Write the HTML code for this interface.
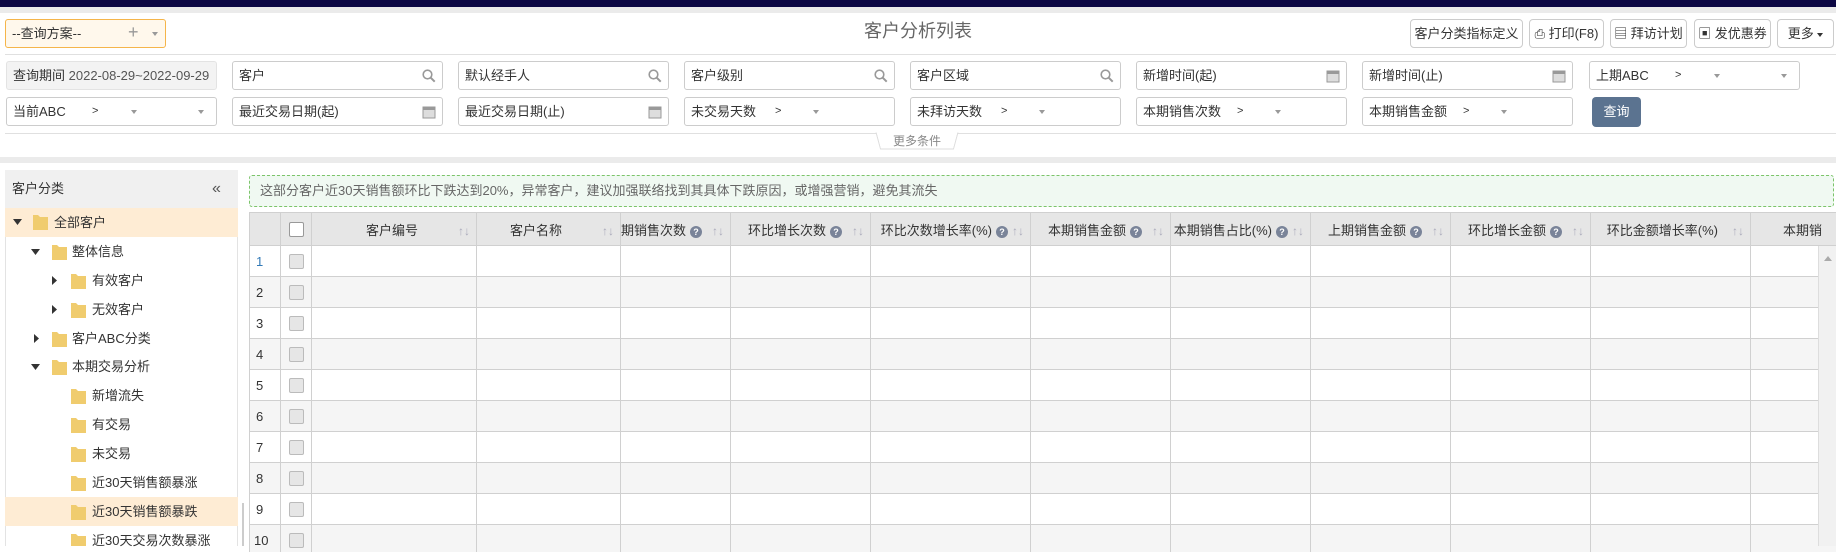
<!DOCTYPE html>
<html><head><meta charset="utf-8"><style>
*{box-sizing:border-box;margin:0;padding:0}
body{width:1836px;height:546px;overflow:hidden;background:#fff;font-family:"Liberation Sans","Noto Sans CJK SC",sans-serif;font-size:13px;color:#333;position:relative}
.a{position:absolute}
.inp{position:absolute;height:29px;border:1px solid #ccc;border-radius:3px;background:#fff;padding-left:6px;line-height:27px;font-size:13px;color:#333}
.btn{position:absolute;top:19px;height:29px;border:1px solid #ccc;border-radius:4px;background:#fff;line-height:27px;text-align:center;font-size:13px}
.ico{position:absolute;right:6px;top:7px}
.caret{display:inline-block;width:0;height:0;border-left:3px solid transparent;border-right:3px solid transparent;border-top:4px solid #999;vertical-align:middle}
.tr{position:absolute;left:5px;width:233px;height:29px;line-height:29px;font-size:13px}
th,td{border:1px solid #d0d0d0;padding:0}
table{border-collapse:collapse;table-layout:fixed}
th{background:#e6e6e6;height:33px;font-weight:normal;font-size:13px;text-align:right;padding-right:6px;white-space:nowrap;overflow:hidden}
td{height:31px}
tr.e td{background:#f5f5f5}
.q{display:inline-block;width:12px;height:12px;border-radius:50%;background:#7a8499;color:#fff;font-size:9px;line-height:12px;text-align:center;font-weight:bold;margin:0 4px}
.s{color:#aab;font-size:12px;margin-left:6px}
.cb{width:15px;height:15px;border:1px solid #bbb;border-radius:2px;background:#e6e6e6;margin:auto}
</style></head><body>
<svg width="0" height="0" style="position:absolute"><defs>
<symbol id="mg" viewBox="0 0 14 14"><circle cx="5.5" cy="5.5" r="4.3" fill="none" stroke="#999" stroke-width="1.6"/><path d="M8.7 8.7l4 4" stroke="#999" stroke-width="2"/></symbol>
<symbol id="cal" viewBox="0 0 14 14"><rect x="1" y="2" width="12" height="11" fill="#ddd" stroke="#999"/><rect x="1" y="2" width="12" height="3" fill="#999"/></symbol>
</defs></svg>
<div class="a" style="left:0;top:0;width:1836px;height:7px;background:#0d0844"></div>
<div class="a" style="left:0;top:7px;width:1836px;height:6px;background:#ebebeb"></div>
<div class="a" style="left:5px;top:19px;width:161px;height:29px;border:1px solid #f5b54a;border-radius:3px;background:#fff8ec;line-height:27px;padding-left:6px">--查询方案--<span style="position:absolute;left:122px;color:#999;font-size:18px;top:-1px">+</span><span class="caret" style="position:absolute;left:146px;top:12px"></span></div>
<div class="a" style="left:0;top:11px;width:1836px;text-align:center;font-size:18px;color:#666;line-height:40px;pointer-events:none">客户分析列表</div>
<div class="btn" style="left:1410px;width:113px">客户分类指标定义</div>
<div class="btn" style="left:1529px;width:75px">⎙ 打印(F8)</div>
<div class="btn" style="left:1610px;width:77px">▤ 拜访计划</div>
<div class="btn" style="left:1694px;width:77px">▣ 发优惠券</div>
<div class="btn" style="left:1777px;width:57px">更多 <span class="caret" style="border-top-color:#333"></span></div>
<div class="a" style="left:5px;top:54px;width:1831px;height:1px;background:#e0e0e0"></div>
<div class="inp" style="left:6px;top:61px;width:211px;background:#f3f3f3;border-color:#e3e3e3">查询期间 <span style="color:#555">2022-08-29~2022-09-29</span></div>
<div class="inp" style="left:232px;top:61px;width:211px">客户<svg class="ico" width="14" height="14"><use href="#mg"/></svg></div>
<div class="inp" style="left:458px;top:61px;width:211px">默认经手人<svg class="ico" width="14" height="14"><use href="#mg"/></svg></div>
<div class="inp" style="left:684px;top:61px;width:211px">客户级别<svg class="ico" width="14" height="14"><use href="#mg"/></svg></div>
<div class="inp" style="left:910px;top:61px;width:211px">客户区域<svg class="ico" width="14" height="14"><use href="#mg"/></svg></div>
<div class="inp" style="left:1136px;top:61px;width:211px">新增时间(起)<svg class="ico" width="14" height="14"><use href="#cal"/></svg></div>
<div class="inp" style="left:1362px;top:61px;width:211px">新增时间(止)<svg class="ico" width="14" height="14"><use href="#cal"/></svg></div>
<div class="inp" style="left:1589px;top:61px;width:211px">上期ABC<span class="a" style="left:85px;font-size:11px">&gt;</span><span class="caret a" style="left:124px;top:12px"></span><span class="caret a" style="left:191px;top:12px"></span></div>
<div class="inp" style="left:6px;top:97px;width:211px">当前ABC<span class="a" style="left:85px;font-size:11px">&gt;</span><span class="caret a" style="left:124px;top:12px"></span><span class="caret a" style="left:191px;top:12px"></span></div>
<div class="inp" style="left:232px;top:97px;width:211px">最近交易日期(起)<svg class="ico" width="14" height="14"><use href="#cal"/></svg></div>
<div class="inp" style="left:458px;top:97px;width:211px">最近交易日期(止)<svg class="ico" width="14" height="14"><use href="#cal"/></svg></div>
<div class="inp" style="left:684px;top:97px;width:211px">未交易天数<span class="a" style="left:90px;font-size:11px">&gt;</span><span class="caret a" style="left:128px;top:12px"></span></div>
<div class="inp" style="left:910px;top:97px;width:211px">未拜访天数<span class="a" style="left:90px;font-size:11px">&gt;</span><span class="caret a" style="left:128px;top:12px"></span></div>
<div class="inp" style="left:1136px;top:97px;width:211px">本期销售次数<span class="a" style="left:100px;font-size:11px">&gt;</span><span class="caret a" style="left:138px;top:12px"></span></div>
<div class="inp" style="left:1362px;top:97px;width:211px">本期销售金额<span class="a" style="left:100px;font-size:11px">&gt;</span><span class="caret a" style="left:138px;top:12px"></span></div>
<div class="a" style="left:1592px;top:97px;width:49px;height:30px;background:#5b7390;border-radius:4px;color:#fff;text-align:center;line-height:30px">查询</div>
<div class="a" style="left:5px;top:133px;width:1831px;height:1px;background:#e0e0e0"></div>
<div class="a" style="left:878px;top:133px;width:78px;height:17px;border:1px solid #ddd;border-top:none;background:#fff;transform:perspective(20px) rotateX(-8deg)"></div>
<div class="a" style="left:878px;top:133px;width:78px;text-align:center;font-size:12px;color:#888;line-height:17px">更多条件</div>
<div class="a" style="left:0;top:157px;width:1836px;height:6px;background:#ebebeb"></div>
<div class="a" style="left:5px;top:170px;width:233px;height:376px;border:1px solid #e3e3e3;border-bottom:none"></div>
<div class="a" style="left:5px;top:170px;width:233px;height:38px;background:#f0f0f0;line-height:38px;padding-left:7px">客户分类<span class="a" style="left:207px;color:#555;font-size:16px">«</span></div>
<div class="tr" style="top:208px;background:#feecd4"></div>
<div class="tr" style="top:497px;background:#feecd4"></div>
<svg class="a" style="left:0;top:0" width="240" height="546">
<g fill="#333">
<path d="M13 219h9l-4.5 6z"/><path d="M31 249h9l-4.5 6z"/>
<path d="M52 276v9l5-4.5z"/><path d="M52 305v9l5-4.5z"/><path d="M34 334v9l5-4.5z"/>
<path d="M31 364h9l-4.5 6z"/>
</g>
<g fill="#f0cc6e">
<path d="M33 215h5l2 2h8v13h-15z"/><path d="M52 245h5l2 2h8v13h-15z"/>
<path d="M71 274h5l2 2h8v13h-15z"/><path d="M71 303h5l2 2h8v13h-15z"/>
<path d="M52 332h5l2 2h8v13h-15z"/><path d="M52 360h5l2 2h8v13h-15z"/>
<path d="M71 389h5l2 2h8v13h-15z"/><path d="M71 418h5l2 2h8v13h-15z"/><path d="M71 447h5l2 2h8v13h-15z"/>
<path d="M71 476h5l2 2h8v13h-15z"/><path d="M71 505h5l2 2h8v13h-15z"/><path d="M71 534h5l2 2h8v13h-15z"/>
</g></svg>
<div class="a" style="left:54px;top:208px;line-height:29px">全部客户</div>
<div class="a" style="left:72px;top:237px;line-height:29px">整体信息</div>
<div class="a" style="left:92px;top:266px;line-height:29px">有效客户</div>
<div class="a" style="left:92px;top:295px;line-height:29px">无效客户</div>
<div class="a" style="left:72px;top:324px;line-height:29px">客户ABC分类</div>
<div class="a" style="left:72px;top:352px;line-height:29px">本期交易分析</div>
<div class="a" style="left:92px;top:381px;line-height:29px">新增流失</div>
<div class="a" style="left:92px;top:410px;line-height:29px">有交易</div>
<div class="a" style="left:92px;top:439px;line-height:29px">未交易</div>
<div class="a" style="left:92px;top:468px;line-height:29px">近30天销售额暴涨</div>
<div class="a" style="left:92px;top:497px;line-height:29px">近30天销售额暴跌</div>
<div class="a" style="left:92px;top:526px;line-height:29px">近30天交易次数暴涨</div>
<div class="a" style="left:242px;top:503px;width:2px;height:43px;background:#ccc"></div>
<div class="a" style="left:249px;top:175px;width:1585px;height:32px;border:1px dashed #7cc46a;border-radius:3px;background:#f0f9f2;line-height:30px;padding-left:10px;color:#666">这部分客户近30天销售额环比下跌达到20%，异常客户，建议加强联络找到其具体下跌原因，或增强营销，避免其流失</div>
<div class="a" style="left:249px;top:212px;width:1600px;height:340px;overflow:hidden">
<table style="width:1600px">
<colgroup><col style="width:31px"><col style="width:31px"><col style="width:165px"><col style="width:144px"><col style="width:110px"><col style="width:140px"><col style="width:160px"><col style="width:140px"><col style="width:140px"><col style="width:140px"><col style="width:140px"><col style="width:160px"><col style="width:99px"></colgroup>
<tr><th></th><th style="padding:0"><div class="cb" style="background:#fff;border-color:#999"></div></th>
<th>客户编号<span class="s" style="margin-left:40px">↑↓</span></th><th>客户名称<span class="s" style="margin-left:40px">↑↓</span></th>
<th style="text-align:left;padding-left:0">期销售次数<span class="q">?</span><span class="s">↑↓</span></th>
<th>环比增长次数<span class="q">?</span><span class="s">↑↓</span></th>
<th>环比次数增长率(%)<span class="q">?</span><span class="s" style="margin:0">↑↓</span></th>
<th>本期销售金额<span class="q">?</span><span class="s">↑↓</span></th>
<th>本期销售占比(%)<span class="q">?</span><span class="s" style="margin:0">↑↓</span></th>
<th>上期销售金额<span class="q">?</span><span class="s">↑↓</span></th>
<th>环比增长金额<span class="q">?</span><span class="s">↑↓</span></th>
<th>环比金额增长率(%)<span class="s" style="margin-left:14px">↑↓</span></th>
<th style="text-align:left;padding-left:32px">本期销</th></tr>
<tr><td style="color:#337ab7;padding-left:6px">1</td><td><div class="cb"></div></td><td></td><td></td><td></td><td></td><td></td><td></td><td></td><td></td><td></td><td></td><td></td></tr>
<tr class="e"><td style="padding-left:6px">2</td><td><div class="cb"></div></td><td></td><td></td><td></td><td></td><td></td><td></td><td></td><td></td><td></td><td></td><td></td></tr>
<tr><td style="padding-left:6px">3</td><td><div class="cb"></div></td><td></td><td></td><td></td><td></td><td></td><td></td><td></td><td></td><td></td><td></td><td></td></tr>
<tr class="e"><td style="padding-left:6px">4</td><td><div class="cb"></div></td><td></td><td></td><td></td><td></td><td></td><td></td><td></td><td></td><td></td><td></td><td></td></tr>
<tr><td style="padding-left:6px">5</td><td><div class="cb"></div></td><td></td><td></td><td></td><td></td><td></td><td></td><td></td><td></td><td></td><td></td><td></td></tr>
<tr class="e"><td style="padding-left:6px">6</td><td><div class="cb"></div></td><td></td><td></td><td></td><td></td><td></td><td></td><td></td><td></td><td></td><td></td><td></td></tr>
<tr><td style="padding-left:6px">7</td><td><div class="cb"></div></td><td></td><td></td><td></td><td></td><td></td><td></td><td></td><td></td><td></td><td></td><td></td></tr>
<tr class="e"><td style="padding-left:6px">8</td><td><div class="cb"></div></td><td></td><td></td><td></td><td></td><td></td><td></td><td></td><td></td><td></td><td></td><td></td></tr>
<tr><td style="padding-left:6px">9</td><td><div class="cb"></div></td><td></td><td></td><td></td><td></td><td></td><td></td><td></td><td></td><td></td><td></td><td></td></tr>
<tr class="e"><td style="padding-left:4px">10</td><td><div class="cb"></div></td><td></td><td></td><td></td><td></td><td></td><td></td><td></td><td></td><td></td><td></td><td></td></tr>
</table></div>
<div class="a" style="left:1818px;top:246px;width:18px;height:300px;background:#f1f1f1;border-left:1px solid #ddd"></div>
<div class="a" style="left:1824px;top:256px;width:0;height:0;border-left:4px solid transparent;border-right:4px solid transparent;border-bottom:5px solid #aaa"></div>
</body></html>
